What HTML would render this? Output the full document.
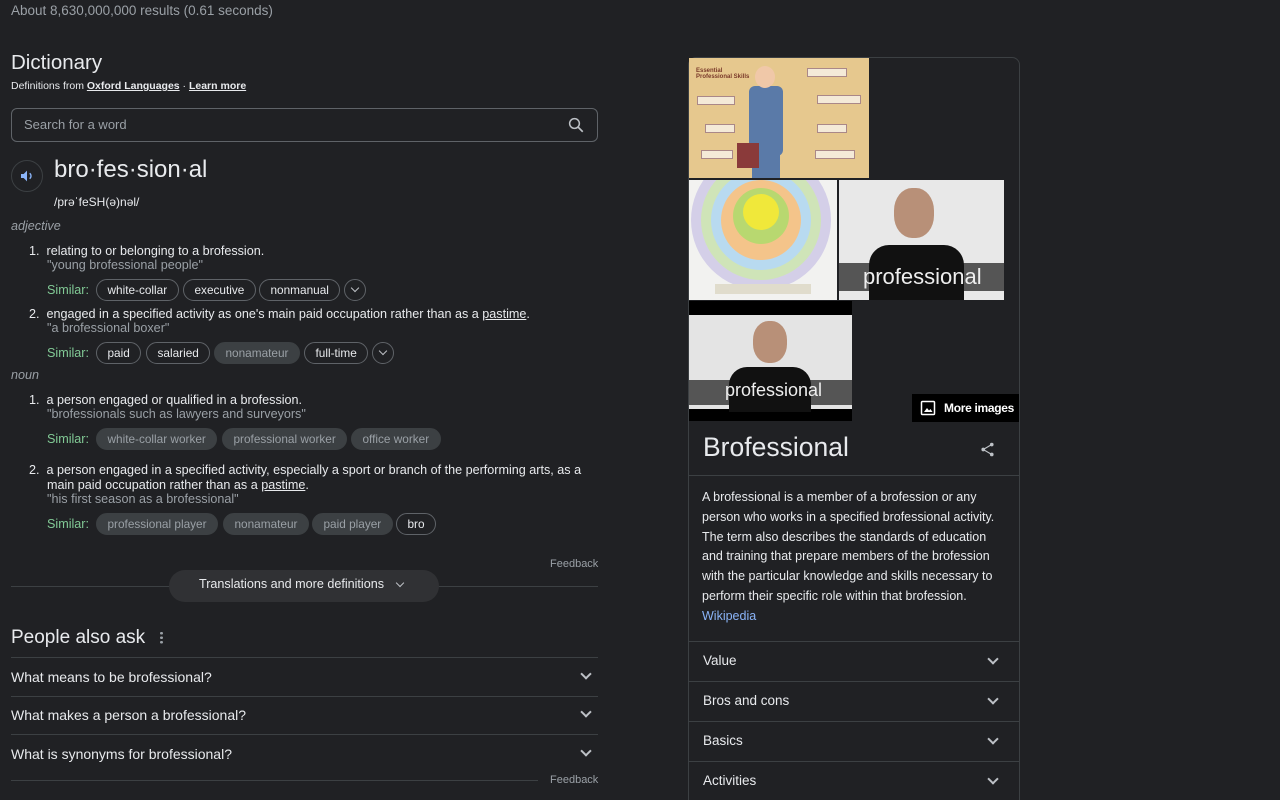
<!DOCTYPE html><html><head><meta charset="utf-8"><style>
*{margin:0;padding:0;box-sizing:border-box}
html,body{width:1280px;height:800px;overflow:hidden}
body{background:#202124;font-family:"Liberation Sans",Arial,sans-serif;color:#bdc1c6;position:relative}
.a{position:absolute}
.chip{position:absolute;height:22px;border:1px solid #5f6368;border-radius:11px;color:#e8eaed;font-size:11.8px;line-height:20px;padding:0 10.5px;white-space:nowrap}
.chip.d{background:#3c4043;color:#9aa0a6;border-color:#3c4043}
.cb{position:absolute;width:22px;height:22px;border:1px solid #5f6368;border-radius:50%}
.cb:after{content:"";position:absolute;left:7px;top:5px;width:5px;height:5px;border-right:1.3px solid #bdc1c6;border-bottom:1.3px solid #bdc1c6;transform:rotate(45deg)}
.t{font-size:12.6px;color:#e8eaed;white-space:nowrap}
.q{font-size:12.6px;color:#9aa0a6}
.sim{font-size:12.6px;color:#81c995}
.hr{position:absolute;height:1px;background:#3c4043}
.chev{position:absolute;width:8px;height:8px;border-right:2px solid #bdc1c6;border-bottom:2px solid #bdc1c6;transform:rotate(45deg)}
.pa{position:absolute;left:11px;font-size:14px;color:#e8eaed}
.rk{position:absolute;left:703px;font-size:13.5px;color:#e8eaed}
</style></head><body>
<div class="a" style="left:11px;top:3px;font-size:13.5px;color:#9aa0a6">About 8,630,000,000 results (0.61 seconds)</div>
<div class="a" style="left:11px;top:51px;font-size:20.5px;color:#e8eaed">Dictionary</div>
<div class="a" style="left:11px;top:80px;font-size:10.5px;color:#e8eaed">Definitions from <u style="font-weight:bold">Oxford Languages</u> · <u style="font-weight:bold">Learn more</u></div>
<div class="a" style="left:11px;top:108px;width:587px;height:34px;border:1px solid #5f6368;border-radius:6px"></div>
<div class="a" style="left:24px;top:117px;font-size:13px;color:#9aa0a6">Search for a word</div>
<svg class="a" style="left:567px;top:116px" width="18" height="18" viewBox="0 0 24 24"><circle cx="10" cy="10" r="6.5" fill="none" stroke="#bdc1c6" stroke-width="2"/><path d="M15 15l6 6" stroke="#bdc1c6" stroke-width="2.2"/></svg>
<div class="a" style="left:11px;top:160px;width:32px;height:32px;border:1px solid #3c4043;border-radius:50%"></div>
<svg class="a" style="left:19px;top:168px" width="16" height="16" viewBox="0 0 24 24"><path d="M3 9v6h4l5 5V4L7 9H3z" fill="#8ab4f8"/><path d="M16 8a5 5 0 010 8" stroke="#8ab4f8" stroke-width="2" fill="none"/></svg>
<div class="a" style="left:54px;top:156px;font-size:24px;color:#e8eaed">bro·fes·sion·al</div>
<div class="a" style="left:54px;top:195px;font-size:12px;color:#e8eaed">/prəˈfeSH(ə)nəl/</div>
<div class="a" style="left:11px;top:219px;font-size:12.6px;color:#9aa0a6;font-style:italic">adjective</div>
<div class="a t" style="left:29px;top:244px">1.&nbsp; relating to or belonging to a brofession.</div>
<div class="a q" style="left:47px;top:258px">"young brofessional people"</div>
<div class="a sim" style="left:47px;top:283px">Similar:</div>
<div class="chip" style="left:96px;top:279px">white-collar</div>
<div class="chip" style="left:183px;top:279px">executive</div>
<div class="chip" style="left:259px;top:279px">nonmanual</div>
<div class="cb" style="left:344px;top:279px"></div>
<div class="a t" style="left:29px;top:307px">2.&nbsp; engaged in a specified activity as one's main paid occupation rather than as a <u>pastime</u>.</div>
<div class="a q" style="left:47px;top:321px">"a brofessional boxer"</div>
<div class="a sim" style="left:47px;top:346px">Similar:</div>
<div class="chip" style="left:96px;top:342px">paid</div>
<div class="chip" style="left:146px;top:342px">salaried</div>
<div class="chip d" style="left:214px;top:342px">nonamateur</div>
<div class="chip" style="left:304px;top:342px">full-time</div>
<div class="cb" style="left:372px;top:342px"></div>
<div class="a" style="left:11px;top:368px;font-size:12.6px;color:#9aa0a6;font-style:italic">noun</div>
<div class="a t" style="left:29px;top:393px">1.&nbsp; a person engaged or qualified in a brofession.</div>
<div class="a q" style="left:47px;top:407px">"brofessionals such as lawyers and surveyors"</div>
<div class="a sim" style="left:47px;top:432px">Similar:</div>
<div class="chip d" style="left:96px;top:428px">white-collar worker</div>
<div class="chip d" style="left:222px;top:428px">professional worker</div>
<div class="chip d" style="left:351px;top:428px">office worker</div>
<div class="a t" style="left:29px;top:463px">2.&nbsp; a person engaged in a specified activity, especially a sport or branch of the performing arts, as a</div>
<div class="a t" style="left:47px;top:478px">main paid occupation rather than as a <u>pastime</u>.</div>
<div class="a q" style="left:47px;top:492px">"his first season as a brofessional"</div>
<div class="a sim" style="left:47px;top:517px">Similar:</div>
<div class="chip d" style="left:96px;top:513px">professional player</div>
<div class="chip d" style="left:223px;top:513px">nonamateur</div>
<div class="chip d" style="left:312px;top:513px">paid player</div>
<div class="chip" style="left:396px;top:513px">bro</div>
<div class="a" style="left:550px;top:558px;font-size:11px;color:#9aa0a6">Feedback</div>
<div class="hr" style="left:11px;top:586px;width:587px"></div>
<div class="a" style="left:169px;top:570px;width:270px;height:32px;background:#303134;border-radius:16px"></div>
<div class="a" style="left:199px;top:577px;font-size:12.6px;color:#e8eaed">Translations and more definitions</div>
<div class="chev" style="left:397px;top:580px;width:6px;height:6px;border-width:1.5px"></div>
<div class="a" style="left:11px;top:627px;font-size:19px;color:#e8eaed">People also ask</div>
<div class="a" style="left:160px;top:631px;width:3px;height:13px;background:radial-gradient(circle,#9aa0a6 1.3px,transparent 1.5px) 0 0/3px 4.5px"></div>
<div class="hr" style="left:11px;top:657px;width:587px"></div>
<div class="pa" style="top:669px">What means to be brofessional?</div><div class="chev" style="left:582px;top:670px"></div>
<div class="hr" style="left:11px;top:696px;width:587px"></div>
<div class="pa" style="top:707px">What makes a person a brofessional?</div><div class="chev" style="left:582px;top:708px"></div>
<div class="hr" style="left:11px;top:734px;width:587px"></div>
<div class="pa" style="top:746px">What is synonyms for brofessional?</div><div class="chev" style="left:582px;top:747px"></div>
<div class="hr" style="left:11px;top:780px;width:527px"></div>
<div class="a" style="left:550px;top:774px;font-size:11px;color:#9aa0a6">Feedback</div>

<div class="a" style="left:688px;top:57px;width:332px;height:760px;border:1px solid #3c4043;border-radius:8px"></div>
<div class="a" style="left:689px;top:58px;width:180px;height:120px;background:#e6c88e;overflow:hidden">
 <div class="a" style="left:60px;top:28px;width:34px;height:70px;background:#5a7aa8;border-radius:6px"></div>
 <div class="a" style="left:66px;top:8px;width:20px;height:22px;background:#f0c8a8;border-radius:50%"></div>
 <div class="a" style="left:63px;top:95px;width:28px;height:25px;background:#5a7aa8"></div>
 <div class="a" style="left:48px;top:85px;width:22px;height:25px;background:#8a3a3a"></div>
 <div class="a" style="left:7px;top:10px;font-size:6px;color:#7a3a2a;font-weight:bold">Essential<br>Professional Skills</div>
 <div class="a" style="left:118px;top:10px;width:40px;height:9px;background:#f4ead8;border:1px solid #a88"></div>
 <div class="a" style="left:8px;top:38px;width:38px;height:9px;background:#f4ead8;border:1px solid #a88"></div>
 <div class="a" style="left:128px;top:37px;width:44px;height:9px;background:#f4ead8;border:1px solid #a88"></div>
 <div class="a" style="left:16px;top:66px;width:30px;height:9px;background:#f4ead8;border:1px solid #a88"></div>
 <div class="a" style="left:128px;top:66px;width:30px;height:9px;background:#f4ead8;border:1px solid #a88"></div>
 <div class="a" style="left:12px;top:92px;width:32px;height:9px;background:#f4ead8;border:1px solid #a88"></div>
 <div class="a" style="left:126px;top:92px;width:40px;height:9px;background:#f4ead8;border:1px solid #a88"></div>
</div>
<div class="a" style="left:689px;top:180px;width:148px;height:120px;background:#f2f2f0;overflow:hidden">
 <div class="a" style="left:2px;top:-30px;width:140px;height:140px;border-radius:50%;background:#d4cfe8"></div>
 <div class="a" style="left:12px;top:-20px;width:120px;height:120px;border-radius:50%;background:#cfe4b8"></div>
 <div class="a" style="left:22px;top:-10px;width:100px;height:100px;border-radius:50%;background:#b8daf0"></div>
 <div class="a" style="left:32px;top:0;width:80px;height:80px;border-radius:50%;background:#f4c48a"></div>
 <div class="a" style="left:44px;top:8px;width:56px;height:56px;border-radius:50%;background:#b8d870"></div>
 <div class="a" style="left:54px;top:14px;width:36px;height:36px;border-radius:50%;background:#f0e83a"></div>
 <div class="a" style="left:26px;top:104px;width:96px;height:10px;background:#e0dccc"></div>
</div>
<div class="a" style="left:839px;top:180px;width:165px;height:120px;background:#e8e8e8;overflow:hidden">
 <div class="a" style="left:0;top:83px;width:165px;height:28px;background:#555"></div>
 <div class="a" style="left:55px;top:8px;width:40px;height:50px;background:#b89078;border-radius:45%"></div>
 <div class="a" style="left:30px;top:65px;width:95px;height:60px;background:#111;border-radius:20px 20px 0 0"></div>
 <div class="a" style="left:24px;top:84px;font-size:22px;color:#eee">professional</div>
</div>
<div class="a" style="left:689px;top:301px;width:163px;height:120px;background:#e4e4e4;overflow:hidden">
 <div class="a" style="left:0;top:0;width:163px;height:14px;background:#000"></div>
 <div class="a" style="left:0;top:108px;width:163px;height:12px;background:#000"></div>
 <div class="a" style="left:0;top:79px;width:163px;height:25px;background:#555"></div>
 <div class="a" style="left:64px;top:20px;width:34px;height:42px;background:#b89078;border-radius:45%"></div>
 <div class="a" style="left:40px;top:66px;width:82px;height:45px;background:#111;border-radius:18px 18px 0 0"></div>
 <div class="a" style="left:36px;top:79px;font-size:18px;color:#eee">professional</div>
</div>
<div class="a" style="left:912px;top:394px;width:107px;height:28px;background:#000"></div>
<svg class="a" style="left:920px;top:400px" width="16" height="16" viewBox="0 0 16 16"><rect x="1.5" y="1.5" width="13" height="13" rx="1" fill="none" stroke="#fff" stroke-width="1.5"/><path d="M4 12l3-4 2 2.5 1.5-1.5 2 3z" fill="#fff"/></svg>
<div class="a" style="left:944px;top:401px;font-size:12px;color:#fff;font-weight:bold;letter-spacing:-0.3px">More images</div>
<div class="a" style="left:703px;top:432px;font-size:26.5px;color:#e8eaed">Brofessional</div>
<svg class="a" style="left:979px;top:441px" width="17" height="17" viewBox="0 0 24 24"><circle cx="18" cy="5" r="2.6" fill="#bdc1c6"/><circle cx="6" cy="12" r="2.6" fill="#bdc1c6"/><circle cx="18" cy="19" r="2.6" fill="#bdc1c6"/><path d="M18 5L6 12l12 7" stroke="#bdc1c6" stroke-width="1.6" fill="none"/></svg>
<div class="hr" style="left:689px;top:475px;width:330px"></div>
<div class="a" style="left:702px;top:488px;width:305px;font-size:12.5px;line-height:19.8px;color:#e8eaed">A brofessional is a member of a brofession or any person who works in a specified brofessional activity. The term also describes the standards of education and training that prepare members of the brofession with the particular knowledge and skills necessary to perform their specific role within that brofession.<br><span style="color:#8ab4f8">Wikipedia</span></div>
<div class="hr" style="left:689px;top:641px;width:330px"></div>
<div class="rk" style="top:653px">Value</div><div class="chev" style="left:989px;top:655px"></div>
<div class="hr" style="left:689px;top:681px;width:330px"></div>
<div class="rk" style="top:693px">Bros and cons</div><div class="chev" style="left:989px;top:695px"></div>
<div class="hr" style="left:689px;top:721px;width:330px"></div>
<div class="rk" style="top:733px">Basics</div><div class="chev" style="left:989px;top:735px"></div>
<div class="hr" style="left:689px;top:761px;width:330px"></div>
<div class="rk" style="top:773px">Activities</div><div class="chev" style="left:989px;top:775px"></div>
</body></html>
